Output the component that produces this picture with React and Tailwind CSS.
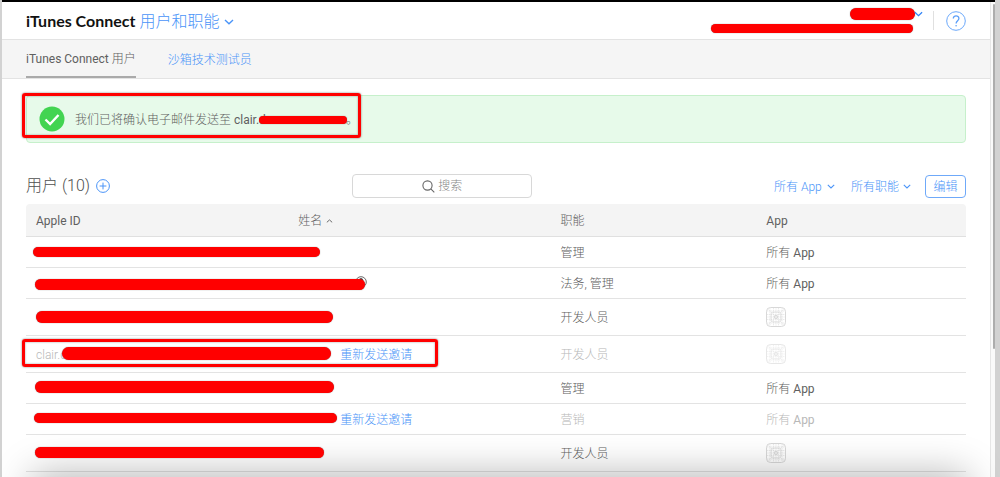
import React from "react";

const bar = "absolute rounded-full bg-[#ff0000] shadow-[0_0_1px_rgba(90,90,90,0.9)]";
const frame = "pointer-events-none absolute rounded-[3px] border-[3px] border-[#ff0000] shadow-[0_0_2px_rgba(80,80,80,0.8),inset_0_0_2px_rgba(80,80,80,0.6)]";

function Chevron({ className = "", up = false }) {
  return (
    <svg viewBox="0 0 10 6" className={className} fill="none" stroke="currentColor" strokeWidth="1.4" aria-hidden="true">
      <path d={up ? "M1 5l4-3.6L9 5" : "M1 1l4 3.8L9 1"} />
    </svg>
  );
}

function AppGridIcon() {
  return (
    <svg viewBox="0 0 20 20" className="block size-5" fill="none" stroke="#dedede" strokeWidth="0.6" aria-label="App">
      <rect x="0.5" y="0.5" width="19" height="19" rx="4" stroke="#d4d4d4" strokeWidth="0.9" />
      <path d="M4 1v18M7.5 1v18M12.5 1v18M16 1v18M1 4h18M1 7.5h18M1 12.5h18M1 16h18" strokeDasharray="1.4 0.6" />
      <path d="M1.6 1.6l16.8 16.8M18.4 1.6L1.6 18.4M10 1v18M1 10h18" strokeWidth="0.35" />
      <circle cx="10" cy="10" r="1.6" stroke="#c4c4c4" />
      <rect x="5.2" y="5.2" width="9.6" height="9.6" rx="1.5" stroke="#cfcfcf" />
    </svg>
  );
}

const rows = [
  { role: "管理", bar: "left-[7px] top-[11px] h-[10px] w-[287px]" },
  { role: "法务, 管理", bar: "left-[9px] top-3 h-[11px] w-[330px]", badge: true },
  { role: "开发人员", icon: true, bar: "left-[10px] top-[13px] h-3 w-[297px]" },
  { role: "开发人员", icon: true, pending: true, id: "clair.d", framed: true, bar: "left-9 top-3 h-[13px] w-[269px]" },
  { role: "管理", bar: "left-[9px] top-[9px] h-3 w-[299px]" },
  { role: "营销", pending: true, bar: "left-2 top-[10px] h-[10px] w-[303px]" },
  { role: "开发人员", icon: true, bar: "left-[9px] top-[13px] h-[11px] w-[289px]" },
];

function UserRow({ row }) {
  const tone = row.pending ? "text-[#b8b8b8]" : "text-[#606060]";
  return (
    <tr className={`relative border-b border-[#e3e3e3] ${row.icon ? "h-[37px]" : "h-[31px]"} ${tone}`}>
      <td className="px-2.5 pt-0.5">
        {row.id}
        <span className={`${bar} z-10 ${row.bar}`} />
        {row.framed && <span className={`${frame} -left-1 top-1 h-7 w-[416px]`} />}
      </td>
      <td className={row.badge ? "px-2.5 pt-2 align-top" : "px-2.5 pt-0.5"}>
        {row.pending && (
          <a href="#resend" className="ml-[42px] whitespace-nowrap text-[#4a94f8]">重新发送邀请</a>
        )}
        {row.badge && (
          <svg viewBox="0 0 12 12" className="ml-[57px] block size-3" fill="none" stroke="#444" strokeWidth="0.8" aria-label="法务">
            <circle cx="6" cy="6" r="5.3" />
            <circle cx="6" cy="4.3" r="1.8" fill="#333" />
            <path d="M2.8 9.6c.5-2.4 5.9-2.4 6.4 0" fill="#333" />
          </svg>
        )}
      </td>
      <td className="px-2.5 pt-0.5">{row.role}</td>
      <td className={row.icon ? "px-2.5" : "px-2.5 pt-0.5"}>
        {row.icon ? (
          <span className={row.pending ? "block opacity-60" : "block"}><AppGridIcon /></span>
        ) : (
          <>所有 <span className="font-normal">App</span></>
        )}
      </td>
    </tr>
  );
}

function Filter({ label, name, width }) {
  return (
    <label className="relative flex items-center text-[#4a94f8]">
      <select aria-label={name} className={`appearance-none bg-transparent pr-3 pt-0.5 outline-none ${width}`}>
        <option>{label}</option>
      </select>
      <Chevron className="pointer-events-none absolute right-0 h-[5px] w-2" />
    </label>
  );
}

export default function App() {
  return (
    <div className="relative flex h-screen overflow-hidden bg-[#d2d2d2] pl-0.5 font-['Roboto','Noto_Sans_CJK_SC',sans-serif] text-xs font-light">
      <div className="min-w-0 flex-1 border-t-2 border-black bg-white">
        <div className="flex h-full">
          <div className="min-w-0 flex-1">
            <header className="flex h-[38px] items-center border-b border-[#e3e3e3] pl-6 pr-6">
              <span className="font-['Lato',sans-serif] text-base font-bold text-[#111]">iTunes Connect</span>
              <button type="button" className="ml-1 flex items-center gap-1 pt-0.5 text-base text-[#4a94f8]">
                用户和职能
                <Chevron className="h-[6px] w-[10px]" />
              </button>
              <div className="relative ml-auto flex items-center">
                <button type="button" aria-label="账户" className="mr-2.5 block h-8 w-[214px] text-[#2f83f7]">
                  <span className={`${bar} left-[141px] top-[3px] h-3 w-[65px]`} />
                  <span className={`${bar} left-0.5 top-[19px] h-[9px] w-[202px]`} />
                  <Chevron className="absolute left-[205px] top-[6px] h-[6px] w-[9px]" />
                </button>
                <span className="h-[19px] w-px bg-[#e0e0e0]" />
                <button type="button" aria-label="帮助" className="ml-3 text-[#5a9ef9]">
                  <svg viewBox="0 0 20 20" className="block size-5" fill="none" stroke="currentColor">
                    <circle cx="10" cy="10" r="9.3" strokeWidth="0.9" />
                    <path d="M7.3 7.5c0-3.5 5.6-3.5 5.6 0 0 2.2-2.8 2.2-2.8 5" strokeWidth="1.3" />
                    <circle cx="10.1" cy="14.8" r="0.8" fill="currentColor" stroke="none" />
                  </svg>
                </button>
              </div>
            </header>

            <nav className="flex h-[39px] gap-8 border-b border-[#e3e3e3] bg-[#f5f5f5] px-6">
              <a href="#users" className="flex items-center border-b-2 border-[#aaa] pt-0.5 text-[#606060]">
                <span><span className="font-normal">iTunes Connect</span> 用户</span>
              </a>
              <a href="#sandbox" className="flex items-center pt-0.5 text-[#4a94f8]">沙箱技术测试员</a>
            </nav>

            <main className="px-6 pt-4">
              <div role="status" className="relative flex h-12 items-center rounded border border-[#c6f0cb] bg-[#e7faea] pl-3 text-[#606060]">
                <svg viewBox="0 0 26 26" className="size-[26px]" aria-hidden="true">
                  <circle cx="13" cy="13" r="12.5" fill="#42d451" />
                  <path d="M6.5 13.5l4.6 4.5L19.5 9" fill="none" stroke="#fff" strokeWidth="2.4" />
                </svg>
                <p className="ml-2.5 whitespace-nowrap pt-0.5">
                  我们已将确认电子邮件发送至 <span className="font-normal">clair.d</span>
                </p>
                <span className={`${bar} left-[232px] top-5 h-2 w-[88px]`} />
                <span className="absolute left-[319px] pt-0.5">。</span>
                <span className={`${frame} -left-[5px] -top-[3px] h-[45px] w-[339px]`} />
              </div>

              <div className="mt-[31px] flex h-6 items-center">
                <div className="flex w-[34.7%] items-center gap-1.5">
                  <h1 className="text-base text-[#505050]">用户 (10)</h1>
                  <button type="button" aria-label="添加用户" className="text-[#4a94f8]">
                    <svg viewBox="0 0 14 14" className="block size-3.5" fill="none" stroke="currentColor" strokeWidth="1">
                      <circle cx="7" cy="7" r="6.4" />
                      <path d="M7 3.6v6.8M3.6 7h6.8" />
                    </svg>
                  </button>
                </div>
                <label className="relative flex items-center">
                  <input type="text" aria-label="搜索" placeholder="搜索" className="h-6 w-[180px] rounded border border-[#d8d8d8] bg-white pl-4 text-center text-[#606060] outline-none placeholder:text-[#888]" />
                  <svg viewBox="0 0 13 13" className="absolute left-[70px] size-[13px]" fill="none" stroke="#666" strokeWidth="1.1" aria-hidden="true">
                    <circle cx="5.5" cy="5.5" r="4.6" />
                    <path d="M8.8 8.8l3.5 3.5" />
                  </svg>
                </label>
                <div className="ml-auto flex items-center">
                  <Filter name="App" label="所有 App" width="w-[61px]" />
                  <span className="w-4" />
                  <Filter name="职能" label="所有职能" width="w-[60px]" />
                  <button type="button" className="ml-[14px] h-[23px] w-[41px] rounded-sm border border-[#6fa9f9] pt-px text-[#4a94f8]">编辑</button>
                </div>
              </div>

              <table className="mt-1.5 w-full table-fixed border-collapse text-left">
                <thead>
                  <tr className="h-8 border-b border-[#e0e0e0] bg-[#f4f4f4] text-[#606060]">
                    <th className="w-[27.9%] rounded-tl px-2.5 pt-0.5 font-normal">Apple ID</th>
                    <th className="w-[27.9%] px-2.5 pt-0.5 font-light">
                      <button type="button" className="flex items-center gap-1">
                        姓名 <Chevron up className="h-1 w-[7px]" />
                      </button>
                    </th>
                    <th className="w-[21.9%] px-2.5 pt-0.5 font-light">职能</th>
                    <th className="rounded-tr px-2.5 pt-0.5 font-normal">App</th>
                  </tr>
                </thead>
                <tbody>
                  {rows.map((row, i) => <UserRow key={i} row={row} />)}
                </tbody>
              </table>
            </main>
          </div>

          <div className="flex w-[5px] justify-end border-l border-[#e6e6e6] bg-[#fafafa] pt-0.5">
            <span className="h-[73%] w-0.5 rounded bg-[#adadad]" />
          </div>
        </div>
      </div>
      <div className="w-[5px] shrink-0" />
      <div className="pointer-events-none absolute -bottom-10 left-10 right-10 h-9 shadow-[0_0_38px_8px_rgba(0,0,0,0.28)]" />
    </div>
  );
}
